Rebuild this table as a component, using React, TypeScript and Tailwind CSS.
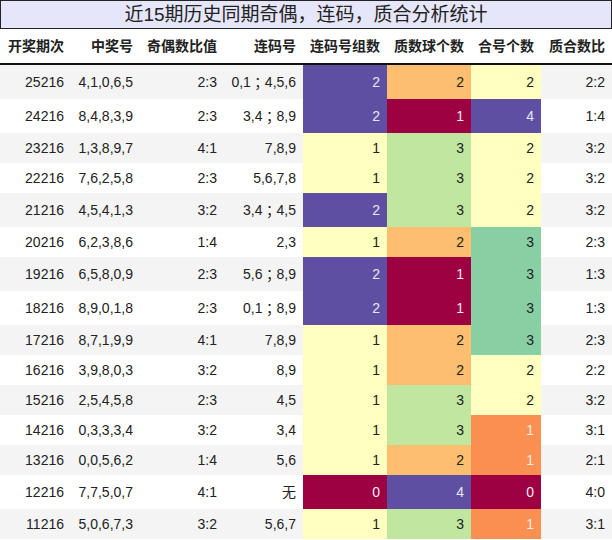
const rows: [string, string, string, string, number, number, number, string][] = [
  ["25216", "4,1,0,6,5", "2:3", "0,1；4,5,6", 2, 2, 2, "2:2"],
  ["24216", "8,4,8,3,9", "2:3", "3,4；8,9", 2, 1, 4, "1:4"],
  ["23216", "1,3,8,9,7", "4:1", "7,8,9", 1, 3, 2, "3:2"],
  ["22216", "7,6,2,5,8", "2:3", "5,6,7,8", 1, 3, 2, "3:2"],
  ["21216", "4,5,4,1,3", "3:2", "3,4；4,5", 2, 3, 2, "3:2"],
  ["20216", "6,2,3,8,6", "1:4", "2,3", 1, 2, 3, "2:3"],
  ["19216", "6,5,8,0,9", "2:3", "5,6；8,9", 2, 1, 3, "1:3"],
  ["18216", "8,9,0,1,8", "2:3", "0,1；8,9", 2, 1, 3, "1:3"],
  ["17216", "8,7,1,9,9", "4:1", "7,8,9", 1, 2, 3, "2:3"],
  ["16216", "3,9,8,0,3", "3:2", "8,9", 1, 2, 2, "2:2"],
  ["15216", "2,5,4,5,8", "2:3", "4,5", 1, 3, 2, "3:2"],
  ["14216", "0,3,3,3,4", "3:2", "3,4", 1, 3, 1, "3:1"],
  ["13216", "0,0,5,6,2", "1:4", "5,6", 1, 2, 1, "2:1"],
  ["12216", "7,7,5,0,7", "4:1", "无", 0, 4, 0, "4:0"],
  ["11216", "5,0,6,7,3", "3:2", "5,6,7", 1, 3, 1, "3:1"],
];

const headers = ["开奖期次", "中奖号", "奇偶数比值", "连码号", "连码号组数", "质数球个数", "合号个数", "质合数比"];

// colour classes per column value
const groupColor: Record<number, string> = {
  0: "bg-[#9e0142] text-[#eeeef4]",
  1: "bg-[#ffffbf] text-[#222]",
  2: "bg-[#5e4fa2] text-[#e8e8f2]",
};
const primeColor: Record<number, string> = {
  1: "bg-[#9e0142] text-[#eeeef4]",
  2: "bg-[#fdbe6f] text-[#222]",
  3: "bg-[#c1e6a0] text-[#222]",
  4: "bg-[#5e4fa2] text-[#e8e8f2]",
};
const compColor: Record<number, string> = {
  0: "bg-[#9e0142] text-[#eeeef4]",
  1: "bg-[#fa8f52] text-[#fbeee6]",
  2: "bg-[#ffffbf] text-[#222]",
  3: "bg-[#88cfa4] text-[#222]",
  4: "bg-[#5e4fa2] text-[#e8e8f2]",
};

export default function App() {
  return (
    <div
      className="w-[612px] bg-white text-[14px] text-[#222]"
      style={{ fontFamily: '"Liberation Sans", "Noto Sans CJK SC", sans-serif' }}
    >
      <div className="flex h-[29px] items-center justify-center border border-[#222] bg-[#e6e6fa] text-[19px] leading-none text-[#222]">
        近15期历史同期奇偶，连码，质合分析统计
      </div>

      <div className="grid grid-cols-[71px_69px_84px_79px_84px_84px_70px_71px]">
        {headers.map((h) => (
          <div
            key={h}
            className="flex h-[36px] items-center justify-end border-b-2 border-[#111] pr-[7px] font-bold"
          >
            {h}
          </div>
        ))}

        {rows.map((r, i) => {
          const tall = r[3].includes("；") || r[3] === "无";
          const h = tall ? "h-[34px]" : "h-[30px]";
          const stripe = i % 2 === 0 ? "bg-[#f4f4f4]" : "bg-white";
          const cell = `flex items-center justify-end pr-[7px] ${h}`;
          const parts = r[3].split("；");
          return [
            <div key={i + "a"} className={`${cell} ${stripe}`}>{r[0]}</div>,
            <div key={i + "b"} className={`${cell} ${stripe}`}>{r[1]}</div>,
            <div key={i + "c"} className={`${cell} ${stripe}`}>{r[2]}</div>,
            <div key={i + "d"} className={`${cell} ${stripe}`}>
              {parts.length > 1 ? (
                <>
                  {parts[0]}
                  <span style={{ fontFamily: '"Noto Sans CJK JP", sans-serif' }}>；</span>
                  {parts[1]}
                </>
              ) : (
                r[3]
              )}
            </div>,
            <div key={i + "e"} className={`${cell} ${groupColor[r[4]]}`}>{r[4]}</div>,
            <div key={i + "f"} className={`${cell} ${primeColor[r[5]]}`}>{r[5]}</div>,
            <div key={i + "g"} className={`${cell} ${compColor[r[6]]}`}>{r[6]}</div>,
            <div key={i + "h"} className={`${cell} ${stripe}`}>{r[7]}</div>,
          ];
        })}
      </div>
    </div>
  );
}
